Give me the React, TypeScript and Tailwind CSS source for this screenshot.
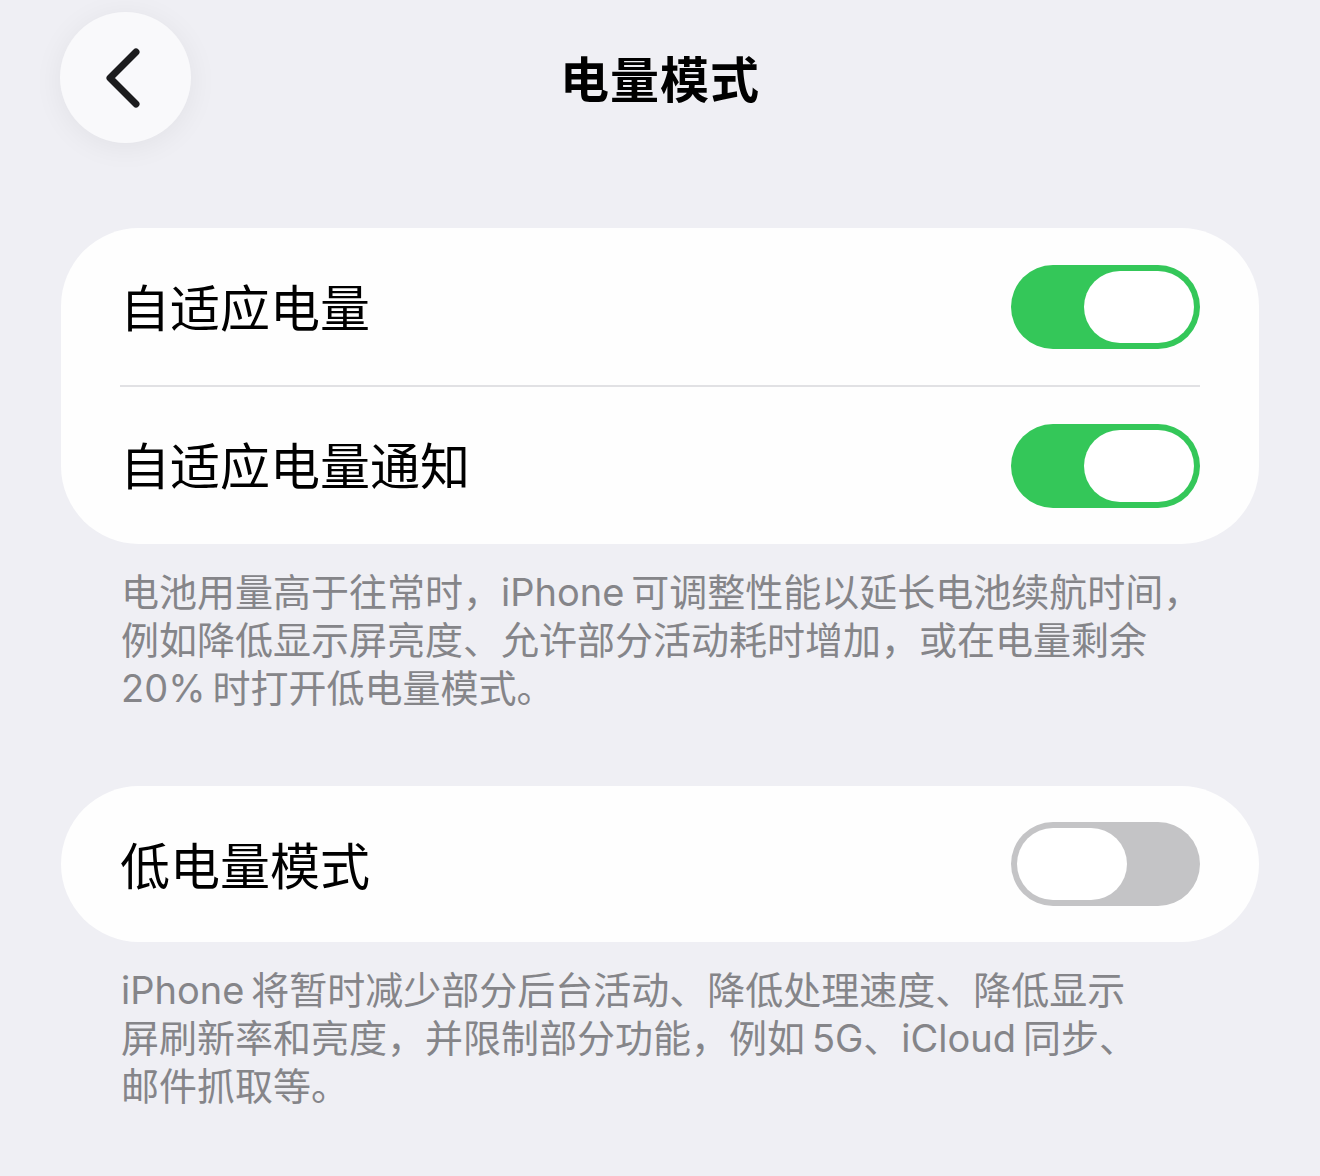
import React, { useState } from "react";

const font = { fontFamily: '"Inter", "Noto Sans CJK SC", sans-serif' };

function Toggle({ on, onClick }: { on: boolean; onClick: () => void }) {
  return (
    <button
      onClick={onClick}
      className={`w-[189px] h-[84px] rounded-full p-[6px] flex items-center ${
        on ? "bg-[#34c759] justify-end" : "bg-[#c4c4c6] justify-start"
      }`}
    >
      <span className="block w-[110px] h-[72px] rounded-full bg-white" />
    </button>
  );
}

export default function App() {
  const [adaptive, setAdaptive] = useState(true);
  const [notify, setNotify] = useState(true);
  const [lowPower, setLowPower] = useState(false);

  return (
    <div className="min-h-screen bg-[#efeff4] text-black" style={font}>
      {/* Шапка */}
      <div className="grid grid-cols-[1fr_auto_1fr] items-center pt-[12px] px-[60px]">
        <div>
          <button className="w-[131px] h-[131px] rounded-full bg-[#f9f9fb] flex items-center justify-center shadow-[0_4px_30px_rgba(0,0,0,0.06)]">
            <svg width="48" height="64" viewBox="0 0 48 64" fill="none">
              <path
                d="M34 6 L8 32 L34 58"
                stroke="#1c1c1e"
                strokeWidth="7"
                strokeLinecap="round"
                strokeLinejoin="round"
              />
            </svg>
          </button>
        </div>
        <h1 className="text-[49px] font-semibold leading-none tracking-[1px] pt-[5px]">电量模式</h1>
        <div />
      </div>

      <div className="px-[61px] pt-[85px]">
        {/* Карточка 1 */}
        <div className="bg-[#fefefe] rounded-[78px]">
          <div className="h-[157px] flex items-center justify-between pl-[59px] pr-[59px]">
            <span className="text-[50px] leading-none pt-[5px]">自适应电量</span>
            <Toggle on={adaptive} onClick={() => setAdaptive(!adaptive)} />
          </div>
          <div className="ml-[59px] mr-[59px] h-[2px] bg-[#e1e1e4]" />
          <div className="h-[157px] flex items-center justify-between pl-[59px] pr-[59px]">
            <span className="text-[50px] leading-none pt-[3px]">自适应电量通知</span>
            <Toggle on={notify} onClick={() => setNotify(!notify)} />
          </div>
        </div>
        <p className="pt-[24px] pl-[60px] text-[38px] leading-[48px] text-[#858589] whitespace-nowrap">
          电池用量高于往常时，iPhone{"\u2009"}可调整性能以延长电池续航时间，
          <br />
          例如降低显示屏亮度、允许部分活动耗时增加，或在电量剩余
          <br />
          20%{"\u2009"}时打开低电量模式。
        </p>

        {/* Карточка 2 */}
        <div className="bg-[#fefefe] rounded-[78px] mt-[74px]">
          <div className="h-[156px] flex items-center justify-between pl-[59px] pr-[59px]">
            <span className="text-[50px] leading-none pt-[5px]">低电量模式</span>
            <Toggle on={lowPower} onClick={() => setLowPower(!lowPower)} />
          </div>
        </div>
        <p className="pt-[24px] pl-[60px] text-[38px] leading-[48px] text-[#858589] whitespace-nowrap">
          iPhone{"\u2009"}将暂时减少部分后台活动、降低处理速度、降低显示
          <br />
          屏刷新率和亮度，并限制部分功能，例如{"\u2009"}5G、iCloud{"\u2009"}同步、
          <br />
          邮件抓取等。
        </p>
      </div>
    </div>
  );
}
